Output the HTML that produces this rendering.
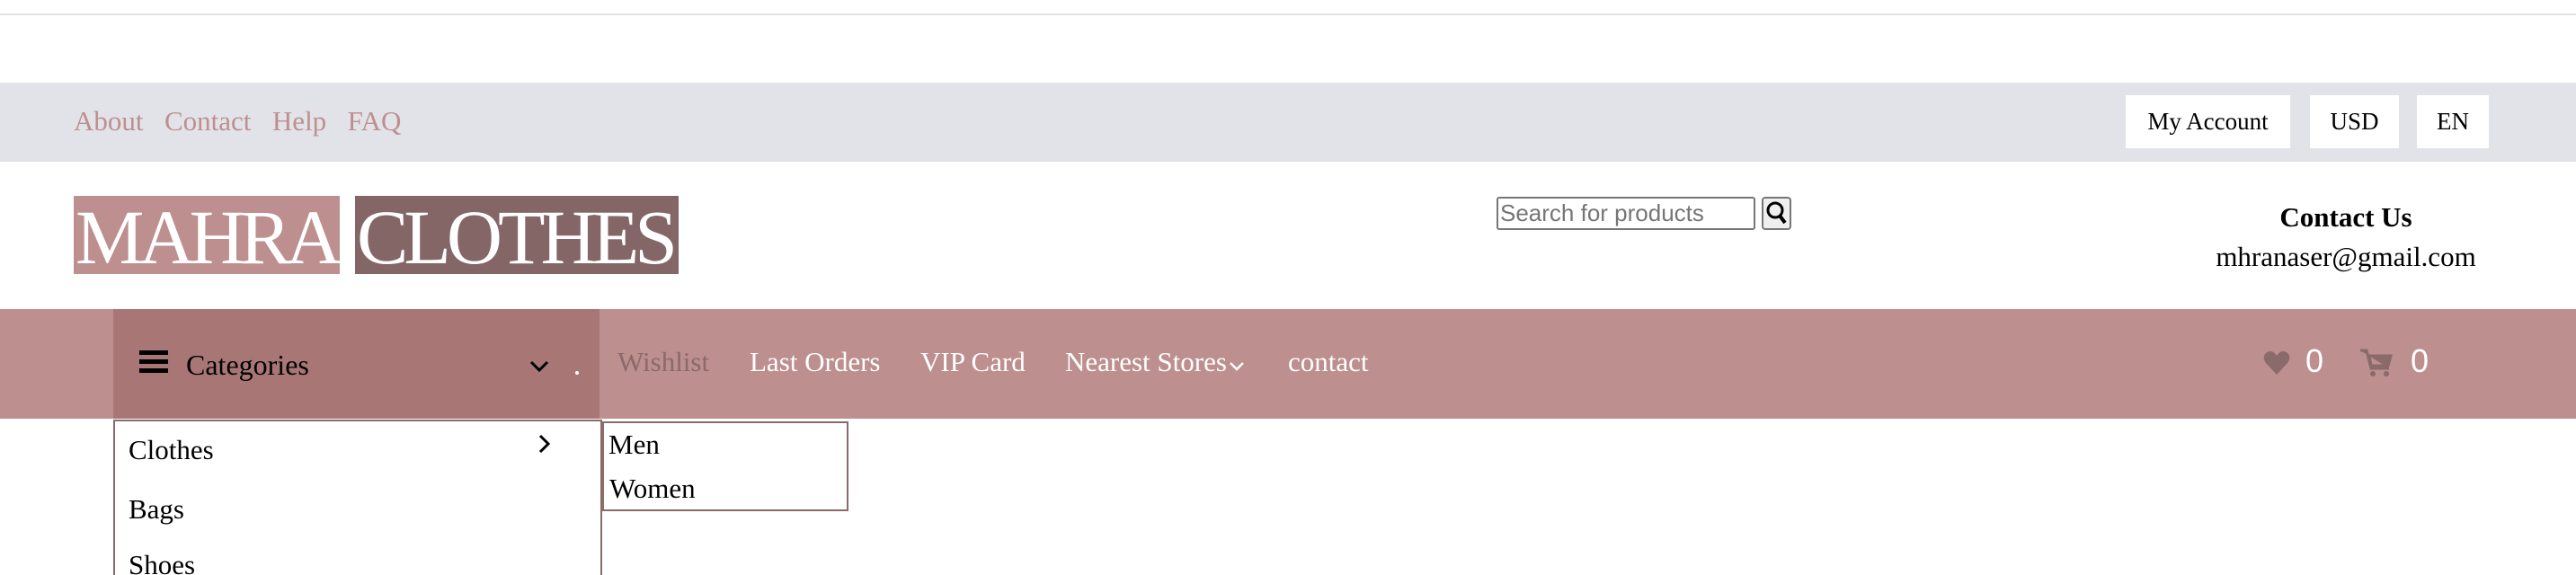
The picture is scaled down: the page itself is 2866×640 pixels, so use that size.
<!DOCTYPE html>
<html style="overflow:hidden;height:640px"><head><meta charset="utf-8"><style>
*{margin:0;padding:0;box-sizing:border-box}
body{width:2866px;height:640px;overflow:hidden;background:#fff;font-family:"Liberation Serif",serif;position:relative}
.a{position:absolute;white-space:nowrap}
</style></head><body>
<div class="a" style="left:0;top:15px;width:2866px;height:2px;background:#e2e2e4"></div>
<div class="a" style="left:0;top:92px;width:2866px;height:88px;background:#e2e3e8"></div>
<div class="a" style="left:82px;top:117px;font-size:31px;color:#bd8f8f;word-spacing:4px">About&nbsp; Contact&nbsp; Help&nbsp; FAQ</div>
<div class="a" style="left:2365px;top:106px;width:183px;height:59px;background:#fff;font-size:27px;text-align:center;line-height:59px">My Account</div>
<div class="a" style="left:2570px;top:106px;width:99px;height:59px;background:#fff;font-size:27px;text-align:center;line-height:59px">USD</div>
<div class="a" style="left:2689px;top:106px;width:80px;height:59px;background:#fff;font-size:27px;text-align:center;line-height:59px">EN</div>
<div class="a" style="left:82px;top:218px;width:296px;height:87px;background:#bd8f8f;color:#fff;font-size:86px;line-height:92px;letter-spacing:-6px;padding-left:2px">MAHRA</div>
<div class="a" style="left:395px;top:218px;width:360px;height:87px;background:#846667;color:#fff;font-size:86px;line-height:92px;letter-spacing:-5px;padding-left:2px">CLOTHES</div>
<div class="a" style="left:1665px;top:219px;width:288px;height:37px;border:2px solid #767676;border-radius:3px;font-family:'Liberation Sans',sans-serif;font-size:26px;color:#757575;line-height:33px;padding-left:2px">Search for products</div>
<div class="a" style="left:1960px;top:219px;width:33px;height:37px;border:2px solid #767676;border-radius:4px;background:#efefef">
<svg width="29" height="33" viewBox="0 0 29 33"><circle cx="13" cy="13" r="8" fill="none" stroke="#000" stroke-width="3"/><line x1="18" y1="19" x2="24" y2="27" stroke="#000" stroke-width="4"/></svg></div>
<div class="a" style="left:2410px;top:224px;width:400px;text-align:center;font-size:31px;font-weight:bold">Contact Us</div>
<div class="a" style="left:2410px;top:268px;width:400px;text-align:center;font-size:31px">mhranaser@gmail.com</div>
<div class="a" style="left:0;top:344px;width:2866px;height:122px;background:#bd8f8f"></div>
<div class="a" style="left:126px;top:344px;width:541px;height:122px;background:#a87775"></div>
<div class="a" style="left:155px;top:390px;width:32px;height:5px;background:#000;box-shadow:0 10px 0 #000,0 20px 0 #000"></div>
<div class="a" style="left:207px;top:388px;font-size:32px">Categories</div>
<svg class="a" style="left:588px;top:400px" width="24" height="16" viewBox="0 0 24 16"><polyline points="3,3 12,12 21,3" fill="none" stroke="#000" stroke-width="3"/></svg>
<div class="a" style="left:640px;top:413px;width:4px;height:4px;border-radius:2px;background:#fff"></div>
<div class="a" style="left:687px;top:385px;font-size:31px;color:#8a6a6a">Wishlist</div>
<div class="a" style="left:834px;top:385px;font-size:31px;color:#fff">Last Orders</div>
<div class="a" style="left:1024px;top:385px;font-size:31px;color:#fff">VIP Card</div>
<div class="a" style="left:1185px;top:385px;font-size:31px;color:#fff">Nearest Stores</div>
<svg class="a" style="left:1367px;top:402px" width="18" height="12" viewBox="0 0 18 12"><polyline points="2,2 9,9 16,2" fill="none" stroke="#fff" stroke-width="2.5"/></svg>
<div class="a" style="left:1433px;top:385px;font-size:31px;color:#fff">contact</div>
<svg class="a" style="left:2518px;top:390px" width="30" height="28" viewBox="0 0 30 28"><path d="M15 27 L3 14 C-2 8 2 1 8 1 C11 1 13 3 15 6 C17 3 19 1 22 1 C28 1 32 8 27 14 Z" fill="#8a6a6a"/></svg>
<div class="a" style="left:2565px;top:381px;font-family:'Liberation Sans',sans-serif;font-size:36px;color:#fff">0</div>
<svg class="a" style="left:2626px;top:388px" width="36" height="32" viewBox="0 0 36 32"><path d="M0 2 H7 L12 22 H32 M10 8 H34 L31 19 H12 Z" fill="#8a6a6a" stroke="#8a6a6a" stroke-width="3"/><circle cx="14" cy="28" r="3" fill="#8a6a6a"/><circle cx="29" cy="28" r="3" fill="#8a6a6a"/></svg>
<div class="a" style="left:2682px;top:381px;font-family:'Liberation Sans',sans-serif;font-size:36px;color:#fff">0</div>
<div class="a" style="left:126px;top:467px;width:544px;height:176px;border:2px solid #8a6a6a;border-bottom:none;background:#fff"></div>
<div class="a" style="left:143px;top:483px;font-size:31px">Clothes</div>
<svg class="a" style="left:598px;top:482px" width="16" height="24" viewBox="0 0 16 24"><polyline points="3,3 12,12 3,21" fill="none" stroke="#000" stroke-width="3"/></svg>
<div class="a" style="left:143px;top:549px;font-size:31px">Bags</div>
<div class="a" style="left:143px;top:611px;font-size:31px">Shoes</div>
<div class="a" style="left:670px;top:469px;width:274px;height:100px;border:2px solid #8a6a6a;background:#fff"></div>
<div class="a" style="left:677px;top:477px;font-size:31px">Men</div>
<div class="a" style="left:678px;top:526px;font-size:31px">Women</div>
</body></html>
